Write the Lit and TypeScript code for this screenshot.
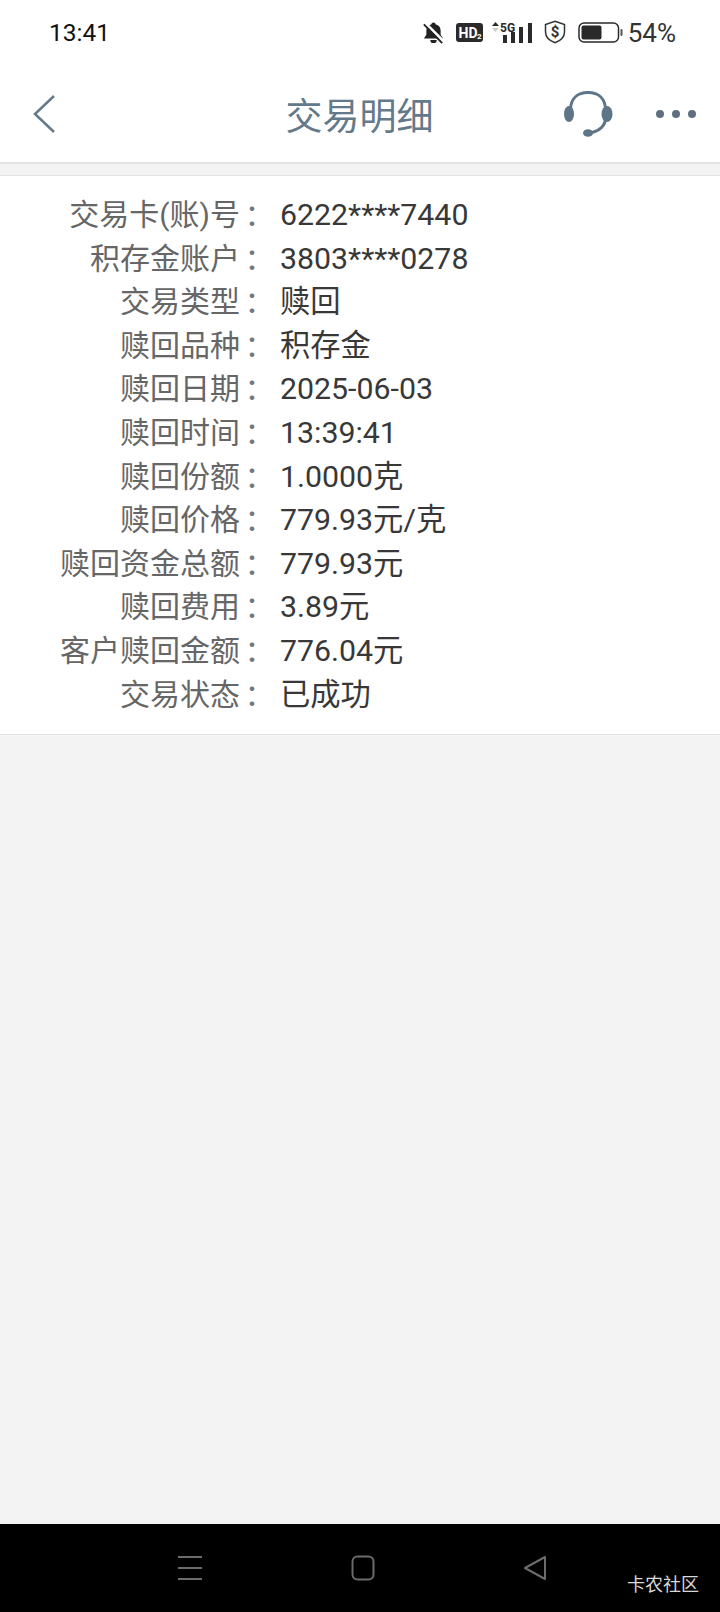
import { LitElement, html, css, svg } from 'lit';
import { customElement } from 'lit/decorators.js';

const ROWS: [string, string][] = [
  ['交易卡(账)号', '6222****7440'],
  ['积存金账户', '3803****0278'],
  ['交易类型', '赎回'],
  ['赎回品种', '积存金'],
  ['赎回日期', '2025-06-03'],
  ['赎回时间', '13:39:41'],
  ['赎回份额', '1.0000克'],
  ['赎回价格', '779.93元/克'],
  ['赎回资金总额', '779.93元'],
  ['赎回费用', '3.89元'],
  ['客户赎回金额', '776.04元'],
  ['交易状态', '已成功'],
];

@customElement('app-root')
export class AppRoot extends LitElement {
  static styles = css`
    :host {
      display: flex;
      flex-direction: column;
      height: 1612px;
      background: #f3f3f3;
      font-family: Roboto, 'Noto Sans CJK SC', sans-serif;
    }
    .status {
      display: flex;
      align-items: center;
      height: 66px;
      padding: 0 44px 0 49px;
      background: #fff;
      color: #222;
      flex-shrink: 0;
    }
    .time {
      font-size: 24.5px;
      color: #111;
      margin-right: auto;
      position: relative;
      top: -1px;
    }
    .status svg {
      display: block;
      flex-shrink: 0;
    }
    .icons {
      display: flex;
      align-items: center;
      gap: 12px;
    }
    .icons .signal {
      margin: -2px -1px 0 -4px;
    }
    .icons .bell,
    .icons .hd,
    .icons .battery {
      margin-top: -1px;
    }
    .icons .shield {
      margin-top: -2px;
    }
    .pct {
      font-size: 26px;
      margin-left: -7px;
      color: #333;
    }
    .header {
      display: flex;
      align-items: center;
      justify-content: space-between;
      height: 98px;
      padding: 0 24px 0 32px;
      background: #fff;
      border-bottom: 2px solid #e4e4e4;
      box-sizing: border-box;
      flex-shrink: 0;
      position: relative;
    }
    .title {
      position: absolute;
      left: 0;
      right: 1px;
      text-align: center;
      font-size: 37px;
      color: #64798a;
    }
    .header-right {
      display: flex;
      align-items: center;
      gap: 43px;
    }
    .strip {
      height: 11px;
      flex-shrink: 0;
    }
    .card {
      background: #fff;
      border-top: 1px solid #e2e2e2;
      border-bottom: 1px solid #e2e2e2;
      padding: 17px 0 18px;
      flex-shrink: 0;
    }
    .row {
      display: flex;
      height: 43.6px;
      line-height: 43.6px;
      font-size: 30px;
      white-space: nowrap;
    }
    .label {
      width: 240px;
      text-align: right;
      color: #666;
    }
    .colon {
      width: 43px;
      margin-left: -3px;
      color: #777;
      font-family: 'Noto Sans CJK TC', sans-serif;
    }
    .value {
      color: #383838;
      font-size: 30.3px;
    }
    .spacer {
      flex: 1;
    }
    .nav {
      height: 88px;
      background: #000;
      flex-shrink: 0;
      position: relative;
      display: flex;
      justify-content: center;
      align-items: center;
      gap: 148px;
      padding-left: 3px;
      box-sizing: border-box;
    }
    .watermark {
      position: absolute;
      right: 21px;
      top: 49px;
      font-size: 18px;
      line-height: 24px;
      color: #d8d8d8;
    }
  `;

  private renderBell() {
    return html`<svg class="bell" width="21" height="22" viewBox="0 0 22 24" fill="#222">
      <path d="M11 .500c1.300 0 2.200.9 2.200 2 3.800.9 5.600 3.600 5.600 7v4.500l2.700 4H.500l2.700-4V9.500c0-3.400 1.800-6.100 5.600-7 0-1.100.900-2 2.200-2z"/>
      <path d="M7.500 19.500h7a3.500 3.500 0 0 1-7 0z"/>
      <path d="M2.500 1.500 22 21" stroke="#fff" stroke-width="3"/>
      <path d="M.500 2.500 20.500 23" stroke="#222" stroke-width="2"/>
    </svg>`;
  }

  private renderHd() {
    return html`<svg class="hd" width="27" height="19" viewBox="0 0 27 19">
      <rect width="27" height="19" rx="3" fill="#2a2a2a"/>
      <text x="2.500" y="14.500" font-family="Roboto" font-weight="700" font-size="14" fill="#fff">HD</text>
      <text x="21" y="15.500" font-family="Roboto" font-weight="700" font-size="8" fill="#fff">2</text>
    </svg>`;
  }

  private renderSignal() {
    return html`<svg class="signal" width="42" height="22" viewBox="0 0 42 22" fill="#2a2a2a">
      <path d="M1 5 4.500 1 8 5z"/>
      <path d="M1 7 4.500 11 8 7z" fill="#ccc"/>
      <text x="9" y="10.500" font-family="Roboto" font-weight="700" font-size="12">5G</text>
      <rect x="12" y="14" width="4" height="8"/>
      <rect x="20" y="11" width="4" height="11"/>
      <rect x="28" y="6" width="4" height="16"/>
      <rect x="37" y="2" width="4" height="20"/>
    </svg>`;
  }

  private renderShield() {
    return html`<svg class="shield" width="22" height="24" viewBox="0 0 22 24" fill="none">
      <path d="M11 1.200 20.500 4.500v7.500c0 5-4 8.700-9.500 10.800C5.500 20.700 1.500 17 1.500 12V4.500z" stroke="#333" stroke-width="1.500"/>
      <text x="11" y="17" text-anchor="middle" font-family="Roboto" font-weight="700" font-size="15" fill="#333">$</text>
    </svg>`;
  }

  private renderBattery() {
    return html`<svg class="battery" width="45" height="21" viewBox="0 0 45 21">
      <rect x="1" y="1" width="39.500" height="19" rx="5" fill="none" stroke="#2a2a2a" stroke-width="1.500"/>
      <rect x="3.500" y="3.500" width="20" height="14" rx="2" fill="#2a2a2a"/>
      <rect x="42.500" y="7" width="2" height="7" rx="1" fill="#555"/>
    </svg>`;
  }

  private renderHeadset() {
    return svg`<svg width="50" height="48" viewBox="0 0 50 48" fill="none">
      <path d="M7.500 19C8 9 14 2.500 25 2.500S42 9 42.500 19v9c0 7-5.500 13-13.500 14.500" stroke="#5e7587" stroke-width="3"/>
      <ellipse cx="6" cy="24" rx="5" ry="8" fill="#5e7587"/>
      <ellipse cx="44" cy="24" rx="5.500" ry="8" fill="#5e7587"/>
      <ellipse cx="25" cy="43" rx="5" ry="3.800" fill="#5e7587"/>
    </svg>`;
  }

  render() {
    return html`
      <div class="status">
        <span class="time">13:41</span>
        <div class="icons">
          ${this.renderBell()} ${this.renderHd()} ${this.renderSignal()}
          ${this.renderShield()} ${this.renderBattery()}
          <span class="pct">54%</span>
        </div>
      </div>
      <div class="header">
        <svg width="24" height="40" viewBox="0 0 24 40" fill="none">
          <path d="M22 2 3 20l19 18" stroke="#64798a" stroke-width="2.500"/>
        </svg>
        <span class="title">交易明细</span>
        <div class="header-right">
          ${this.renderHeadset()}
          <svg width="40" height="10" viewBox="0 0 40 10" fill="#5f6f7d">
            <circle cx="4" cy="5" r="4"/>
            <circle cx="20" cy="5" r="4"/>
            <circle cx="36" cy="5" r="4"/>
          </svg>
        </div>
      </div>
      <div class="strip"></div>
      <div class="card">
        ${ROWS.map(
          ([label, value]) => html`
            <div class="row">
              <span class="label">${label}</span>
              <span class="colon">：</span>
              <span class="value">${value}</span>
            </div>
          `
        )}
      </div>
      <div class="spacer"></div>
      <div class="nav">
        <svg width="26" height="26" viewBox="0 0 26 26" stroke="#6b6b6b" stroke-width="2">
          <path d="M1 2h24M1 13h24M1 24h24"/>
        </svg>
        <svg width="24" height="26" viewBox="0 0 24 26" fill="none" stroke="#6b6b6b" stroke-width="2">
          <rect x="1.500" y="1.500" width="21" height="23" rx="5"/>
        </svg>
        <svg width="24" height="26" viewBox="0 0 24 26" fill="none" stroke="#6b6b6b" stroke-width="2" stroke-linejoin="round">
          <path d="M22 2v22L2 13z"/>
        </svg>
        <span class="watermark">卡农社区</span>
      </div>
    `;
  }
}
